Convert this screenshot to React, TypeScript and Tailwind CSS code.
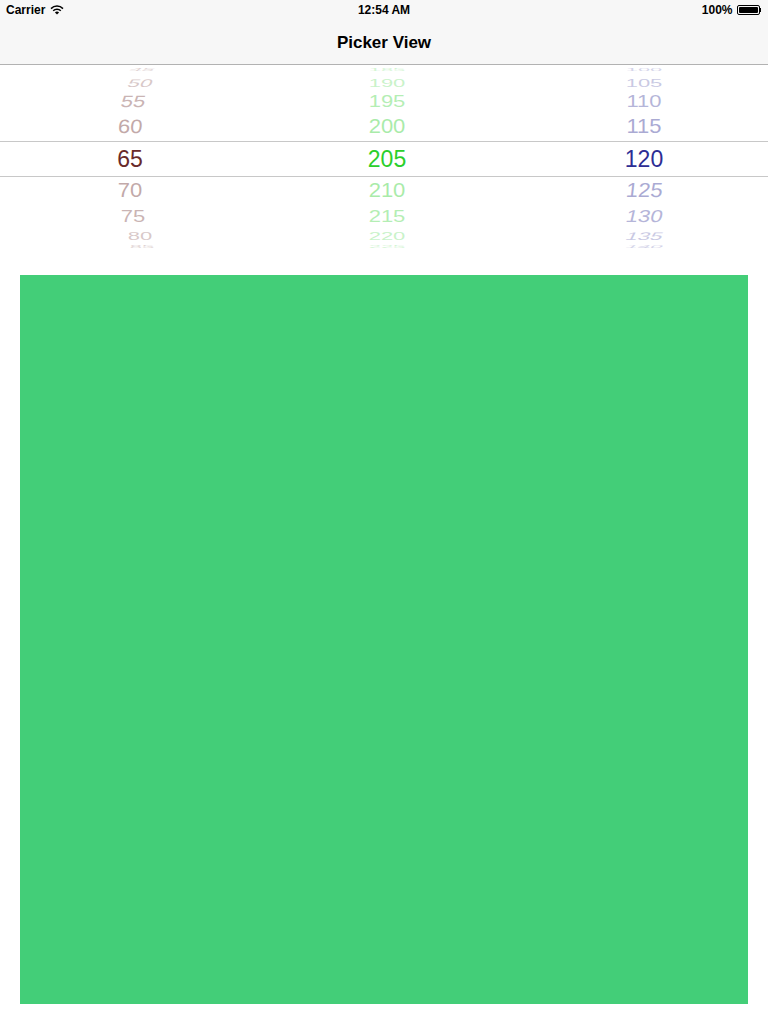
import React from 'react';

type Item = { label: string; h: string; scale: string; tone: string; shift: string; skew: string };

const colors = {
  red: 'text-[#692a2a]',
  green: 'text-[#2bcf2b]',
  blue: 'text-[#2d2d94]',
};

function makeItems(values: string[], side: 'left' | 'mid' | 'right'): Item[] {
  const heights = ['h-[10px]', 'h-[15px]', 'h-[23px]', 'h-[28px]', 'h-[36px]', 'h-[28px]', 'h-[23px]', 'h-[15px]', 'h-[8px]'];
  const scales = ['scale-y-[0.2]', 'scale-y-[0.5]', 'scale-y-[0.75]', 'scale-y-[0.88]', '', 'scale-y-[0.92]', 'scale-y-[0.78]', 'scale-y-[0.5]', 'scale-y-[0.18]'];
  const tones = ['opacity-20', 'opacity-25', 'opacity-35', 'opacity-40', 'opacity-100', 'opacity-40', 'opacity-35', 'opacity-25', 'opacity-20'];
  const leftShift = ['translate-x-[14px]', 'translate-x-[12px]', 'translate-x-[5px]', 'translate-x-[1px]', '', 'translate-x-[1px]', 'translate-x-[5px]', 'translate-x-[12px]', 'translate-x-[14px]'];
  const rightShift = ['-translate-x-[16px]', '-translate-x-[14px]', '-translate-x-[7px]', '-translate-x-[1px]', '', '-translate-x-[1px]', '-translate-x-[5px]', '-translate-x-[12px]', '-translate-x-[16px]'];
  const leftSkew = ['-skew-x-[14deg]', '-skew-x-[14deg]', '-skew-x-[10deg]', '-skew-x-[4deg]', '', '', '', '', ''];
  const rightSkew = ['', '', '', '', '', '-skew-x-[6deg]', '-skew-x-[10deg]', '-skew-x-[14deg]', '-skew-x-[14deg]'];
  return values.map((label, i) => ({
    label,
    h: heights[i],
    scale: scales[i],
    tone: tones[i],
    shift: side === 'left' ? leftShift[i] : side === 'right' ? rightShift[i] : '',
    skew: side === 'left' ? leftSkew[i] : side === 'right' ? rightSkew[i] : '',
  }));
}

function Column({ values, side, color, offset }: { values: string[]; side: 'left' | 'mid' | 'right'; color: string; offset: string }) {
  const items = makeItems(values, side);
  return (
    <div className="flex flex-col">
      {items.map((it, i) => (
        <div
          key={it.label}
          className={`flex items-center justify-center overflow-hidden ${it.h} ${i === 4 ? 'border-y border-[#c8c8c8]' : ''}`}
        >
          <span
            className={`block leading-none ${i === 4 ? 'text-[23px]' : 'text-[22px]'} ${color} ${it.tone} ${it.scale} ${it.shift} ${it.skew} ${offset}`}
          >
            {it.label}
          </span>
        </div>
      ))}
    </div>
  );
}

function Wifi() {
  return (
    <svg width="14" height="10" viewBox="0 0 14 10" className="ml-[5px]">
      <path d="M1 3.6 A8.5 8.5 0 0 1 13 3.6" stroke="#000" strokeWidth="1.5" fill="none" />
      <path d="M3.2 5.7 A5.4 5.4 0 0 1 10.8 5.7" stroke="#000" strokeWidth="1.5" fill="none" />
      <path d="M7 9.6 L4.9 7.6 A3 3 0 0 1 9.1 7.6 Z" fill="#000" />
    </svg>
  );
}

function Battery() {
  return (
    <div className="ml-[4px] flex items-center">
      <div className="h-[10px] w-[23px] rounded-[2px] border border-black p-[1px]">
        <div className="h-full w-full rounded-[1px] bg-black" />
      </div>
      <div className="h-[4px] w-[1.5px] bg-black" />
    </div>
  );
}

export default function App() {
  return (
    <div className="flex h-[1024px] w-[768px] flex-col bg-white font-['Liberation_Sans',Arial,sans-serif]">
      <div className="flex h-[65px] flex-col border-b border-[#b2b2b2] bg-[#f7f7f7]">
        <div className="grid h-[20px] grid-cols-3 items-center px-[6px] text-[12px] font-bold text-black">
          <div className="flex items-center">
            <span>Carrier</span>
            <Wifi />
          </div>
          <div className="text-center">12:54 AM</div>
          <div className="flex items-center justify-end pr-[1px]">
            <span>100%</span>
            <Battery />
          </div>
        </div>
        <div className="flex flex-1 items-center justify-center pt-[1px] text-[17px] font-bold text-black">
          Picker View
        </div>
      </div>

      <div className="grid h-[210px] grid-cols-3">
        <Column values={['45', '50', '55', '60', '65', '70', '75', '80', '85']} side="left" color={colors.red} offset="translate-x-[2px]" />
        <Column values={['185', '190', '195', '200', '205', '210', '215', '220', '225']} side="mid" color={colors.green} offset="translate-x-[3px]" />
        <Column values={['100', '105', '110', '115', '120', '125', '130', '135', '140']} side="right" color={colors.blue} offset="translate-x-[4px]" />
      </div>

      <div className="mx-[20px] h-[729px] bg-[#43ce78]" />
    </div>
  );
}
